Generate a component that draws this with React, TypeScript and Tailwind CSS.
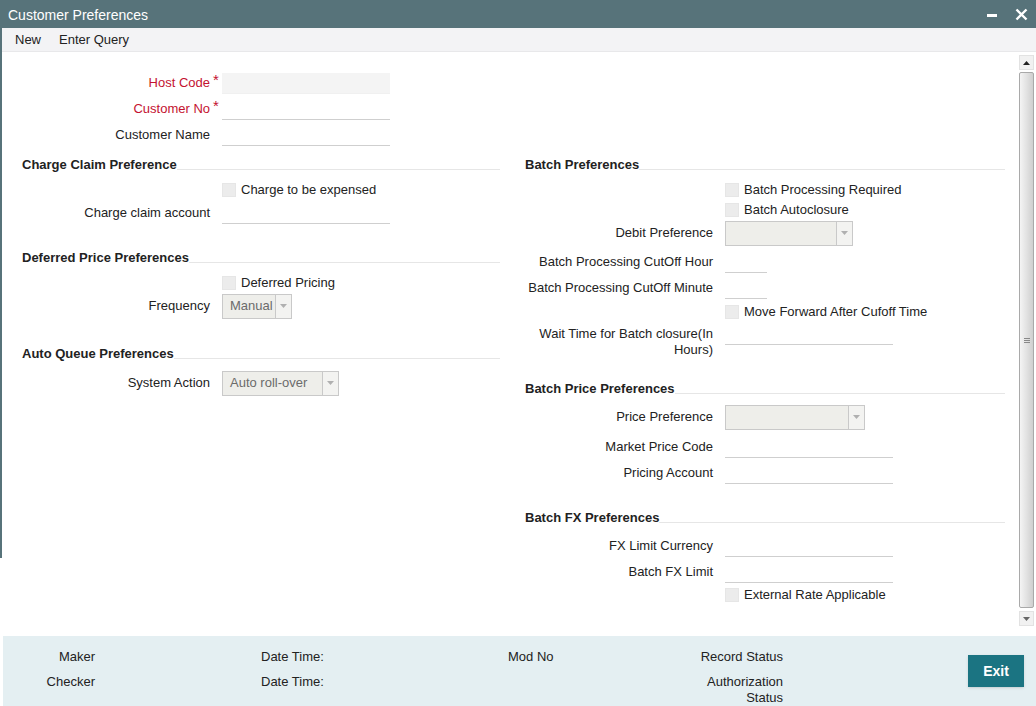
import React from 'react';

type RowProps = {
  label?: React.ReactNode;
  required?: boolean;
  red?: boolean;
  className?: string;
  children?: React.ReactNode;
};

function Row({ label, required, red, className = '', children }: RowProps) {
  return (
    <div className={`flex items-center ${className}`}>
      <div className={`w-[188px] text-right leading-[16px] ${red ? 'text-[#c41230]' : 'text-[#222]'}`}>{label}</div>
      <div className="w-[12px] text-center text-[#c41230] text-[15px] -mt-[5px]">{required ? '*' : ''}</div>
      {children}
    </div>
  );
}

function TextBox({ w = 'w-[168px]', grey = false }: { w?: string; grey?: boolean }) {
  return (
    <div
      className={`${w} h-[21px] ${grey ? 'bg-[#f4f4f4] border-b border-[#f0f0f0]' : 'border-b border-[#cfcfcf]'}`}
    ></div>
  );
}

function Check({ label }: { label: string }) {
  return (
    <div className="flex items-center">
      <div className="w-[14px] h-[14px] bg-[#ececec] border border-[#e6e6e6]"></div>
      <span className="ml-[5px] text-[#222]">{label}</span>
    </div>
  );
}

function Select({ w, value = '' }: { w: string; value?: string }) {
  return (
    <div className={`${w} h-[25px] flex bg-[#eeeeea] border border-[#c9c9c9]`}>
      <div className="flex-1 flex items-center pl-[7px] text-[#6b6b6b]">{value}</div>
      <div className="w-[16px] border-l border-[#c9c9c9] flex items-center justify-center bg-[#f3f3f1]">
        <svg width="7" height="4" viewBox="0 0 7 4">
          <path d="M0 0h7L3.5 4z" fill="#b0b0b0" />
        </svg>
      </div>
    </div>
  );
}

function Header({ title }: { title: string }) {
  return (
    <div className="h-[20px] flex items-center">
      <span className="font-bold text-[#222]">{title}</span>
      <div className="flex-1 h-px bg-[#e6e6e6] mt-[8px]"></div>
    </div>
  );
}

export default function App() {
  return (
    <div
      className="relative w-[1036px] h-[706px] flex flex-col bg-white text-[13px] overflow-hidden"
      style={{ fontFamily: '"Liberation Sans", Arial, sans-serif' }}
    >
      {/* Title bar */}
      <div className="h-[28px] bg-[#57737a] flex items-center justify-between pl-[8px] pr-[8px] text-white">
        <span className="text-[14px] mt-[2px]">Customer Preferences</span>
        <div className="flex items-center gap-[18px]">
          <svg width="10" height="12" viewBox="0 0 10 12">
            <rect x="0" y="6" width="10" height="3" fill="#fff" />
          </svg>
          <svg width="13" height="13" viewBox="0 0 13 13">
            <path d="M1.5 1.5l10 10M11.5 1.5l-10 10" stroke="#fff" strokeWidth="2.4" />
          </svg>
        </div>
      </div>

      {/* Toolbar */}
      <div className="h-[24px] bg-[#f3f3f5] border-b border-[#e8e8ea] flex items-center pl-[15px] gap-[18px] text-[#222]">
        <span>New</span>
        <span>Enter Query</span>
      </div>

      {/* Body */}
      <div className="flex-1 flex min-h-0">
        <div className="flex-1 pl-[22px] pt-[18px]">
          <Row label="Host Code" required red className="h-[26px]">
            <TextBox grey />
          </Row>
          <Row label="Customer No" required red className="h-[26px]">
            <TextBox />
          </Row>
          <Row label="Customer Name" className="h-[26px]">
            <TextBox />
          </Row>

          <div className="flex mt-[7px]">
            {/* Left column */}
            <div className="w-[478px] mr-[25px] flex flex-col">
              <Header title="Charge Claim Preference" />
              <Row className="h-[20px] mt-[5px]">
                <Check label="Charge to be expensed" />
              </Row>
              <Row label="Charge claim account" className="h-[24px] mt-[1px]">
                <TextBox />
              </Row>
              <div className="mt-[23px]">
                <Header title="Deferred Price Preferences" />
              </div>
              <Row className="h-[20px] mt-[5px]">
                <Check label="Deferred Pricing" />
              </Row>
              <Row label="Frequency" className="h-[24px] mt-[1px]">
                <Select w="w-[70px]" value="Manual" />
              </Row>
              <div className="mt-[26px]">
                <Header title="Auto Queue Preferences" />
              </div>
              <Row label="System Action" className="h-[24px] mt-[7px]">
                <Select w="w-[117px]" value="Auto roll-over" />
              </Row>
            </div>

            {/* Right column */}
            <div className="w-[480px] flex flex-col">
              <Header title="Batch Preferences" />
              <Row className="h-[20px] mt-[5px]">
                <Check label="Batch Processing Required" />
              </Row>
              <Row className="h-[20px]">
                <Check label="Batch Autoclosure" />
              </Row>
              <Row label="Debit Preference" className="h-[24px] mt-[1px]">
                <Select w="w-[128px]" />
              </Row>
              <Row label="Batch Processing CutOff Hour" className="h-[24px] mt-[5px]">
                <TextBox w="w-[42px]" />
              </Row>
              <Row label="Batch Processing CutOff Minute" className="h-[24px] mt-[2px]">
                <TextBox w="w-[42px]" />
              </Row>
              <Row className="h-[20px] mt-[2px]">
                <Check label="Move Forward After Cufoff Time" />
              </Row>
              <div className="flex items-start h-[32px] mt-[4px]">
                <div className="w-[188px] text-right leading-[16px] text-[#222]">
                  Wait Time for Batch closure(In
                  <br />
                  Hours)
                </div>
                <div className="w-[12px]"></div>
                <div className="w-[168px] h-[19px] border-b border-[#cfcfcf]"></div>
              </div>
              <div className="mt-[21px]">
                <Header title="Batch Price Preferences" />
              </div>
              <Row label="Price Preference" className="h-[24px] mt-[6px]">
                <Select w="w-[140px]" />
              </Row>
              <Row label="Market Price Code" className="h-[24px] mt-[6px]">
                <TextBox />
              </Row>
              <Row label="Pricing Account" className="h-[24px] mt-[2px]">
                <TextBox />
              </Row>
              <div className="mt-[23px]">
                <Header title="Batch FX Preferences" />
              </div>
              <Row label="FX Limit Currency" className="h-[24px] mt-[6px]">
                <TextBox />
              </Row>
              <Row label="Batch FX Limit" className="h-[24px] mt-[2px]">
                <TextBox />
              </Row>
              <Row className="h-[20px] mt-[1px]">
                <Check label="External Rate Applicable" />
              </Row>
            </div>
          </div>
        </div>

        {/* Scrollbar */}
        <div className="w-[19px] flex flex-col pt-[3px] pb-[10px] pl-[2px] pr-[2px]">
          <div className="h-[15px] bg-[#f1f1f1] border border-[#e2e2e2] flex items-center justify-center">
            <svg width="7" height="4" viewBox="0 0 7 4">
              <path d="M3.5 0L7 4H0z" fill="#222" />
            </svg>
          </div>
          <div className="flex-1 mt-[2px] mb-[3px] border border-[#a9a9a9] rounded-[2px] bg-gradient-to-r from-[#f4f4f4] via-[#e2e2e2] to-[#cfcfcf] flex items-center justify-center">
            <div className="flex flex-col gap-[1px]">
              <div className="w-[6px] h-px bg-[#888]"></div>
              <div className="w-[6px] h-px bg-[#888]"></div>
              <div className="w-[6px] h-px bg-[#888]"></div>
            </div>
          </div>
          <div className="h-[15px] bg-[#f1f1f1] border border-[#e2e2e2] flex items-center justify-center">
            <svg width="7" height="4" viewBox="0 0 7 4">
              <path d="M0 0h7L3.5 4z" fill="#666" />
            </svg>
          </div>
        </div>
      </div>

      {/* Footer */}
      <div className="h-[70px] ml-[3px] bg-[#e4eff2] flex text-[#222] leading-[16px]">
        <div className="w-[92px] pt-[13px] flex flex-col gap-[9px] items-end">
          <span>Maker</span>
          <span>Checker</span>
        </div>
        <div className="ml-[166px] w-[247px] pt-[13px] flex flex-col gap-[9px]">
          <span>Date Time:</span>
          <span>Date Time:</span>
        </div>
        <div className="w-[180px] pt-[13px]">
          <span>Mod No</span>
        </div>
        <div className="w-[95px] pt-[13px] flex flex-col gap-[9px] text-right">
          <span>Record Status</span>
          <span>
            Authorization
            <br />
            Status
          </span>
        </div>
        <div className="ml-auto mr-[12px] mt-[19px]">
          <button className="w-[56px] h-[32px] bg-[#1b7482] text-white font-bold text-[14px] shadow-sm">
            Exit
          </button>
        </div>
      </div>

      {/* window frame edge */}
      <div className="absolute left-0 top-[28px] w-[2px] h-[530px] bg-[#57737a]"></div>
    </div>
  );
}
